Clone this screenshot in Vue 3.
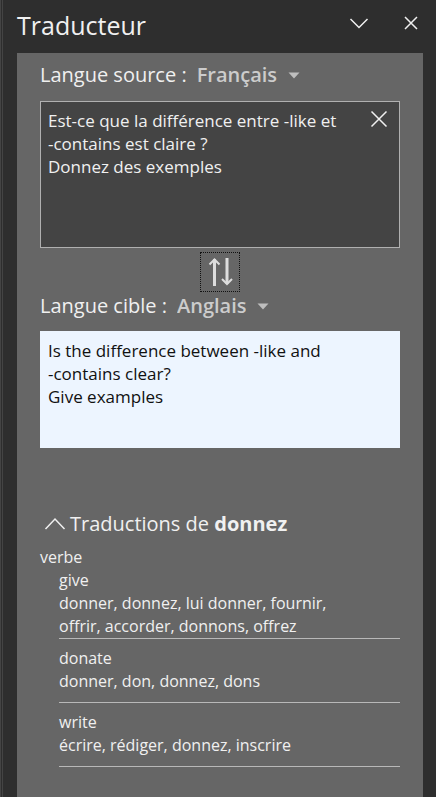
<script setup>
import { ref } from 'vue'

const languages = ['Français', 'Anglais', 'Allemand', 'Espagnol', 'Italien']
const sourceLanguage = ref('Français')
const targetLanguage = ref('Anglais')
const sourceText = ref('Est-ce que la différence entre -like et\n-contains est claire ?\nDonnez des exemples')
const targetText = ref('Is the difference between -like and\n-contains clear?\nGive examples')
const expanded = ref(true)

const word = 'donnez'
const translations = [
  { term: 'give', meanings: 'donner, donnez, lui donner, fournir, offrir, accorder, donnons, offrez' },
  { term: 'donate', meanings: 'donner, don, donnez, dons' },
  { term: 'write', meanings: 'écrire, rédiger, donnez, inscrire' },
]

function swapLanguages() {
  const language = sourceLanguage.value
  sourceLanguage.value = targetLanguage.value
  targetLanguage.value = language
  const text = sourceText.value
  sourceText.value = targetText.value
  targetText.value = text
}
</script>

<template>
  <main class="pane">
    <header class="header">
      <h1 class="title">Traducteur</h1>
      <button class="icon-button" type="button" aria-label="Options du volet">
        <svg width="20" height="20" viewBox="0 0 20 20"><path d="M1.500 6 10 14.500 18.500 6" /></svg>
      </button>
      <button class="icon-button" type="button" aria-label="Fermer">
        <svg width="20" height="20" viewBox="0 0 20 20"><path d="M4 4 16 16M16 4 4 16" /></svg>
      </button>
    </header>

    <section class="panel">
      <div class="language">
        <label for="source-language">Langue source :</label>
        <span class="picker">
          <select id="source-language" v-model="sourceLanguage">
            <option v-for="name in languages" :key="name">{{ name }}</option>
          </select>
          <svg class="caret" width="12" height="7" viewBox="0 0 12 7"><path d="M0.500 0.500H11.500L6 6.500Z" /></svg>
        </span>
      </div>

      <div class="source">
        <textarea v-model="sourceText" class="text" aria-label="Texte source" spellcheck="false"></textarea>
        <button class="clear" type="button" aria-label="Effacer" @click="sourceText = ''">
          <svg width="20" height="20" viewBox="0 0 20 20"><path d="M2.500 2.500 17.500 17.500M17.500 2.500 2.500 17.500" /></svg>
        </button>
      </div>

      <button class="swap" type="button" aria-label="Inverser les langues" @click="swapLanguages">
        <svg width="28" height="32" viewBox="0 0 28 32">
          <path class="shaft" d="M8.500 3V30M21 2V28" />
          <path class="head" d="M3.500 8.500 8.500 3.500 13.500 8.500M16 23 21 28 26 23" />
        </svg>
      </button>

      <div class="language">
        <label for="target-language">Langue cible :</label>
        <span class="picker">
          <select id="target-language" v-model="targetLanguage">
            <option v-for="name in languages" :key="name">{{ name }}</option>
          </select>
          <svg class="caret" width="12" height="7" viewBox="0 0 12 7"><path d="M0.500 0.500H11.500L6 6.500Z" /></svg>
        </span>
      </div>

      <textarea v-model="targetText" class="text target" aria-label="Texte traduit" readonly></textarea>

      <h2 class="heading">
        <button class="toggle" type="button" :aria-expanded="expanded" @click="expanded = !expanded">
          <svg width="22" height="14" viewBox="0 0 22 14"><path d="M1.500 12 11 2 20.500 12" /></svg>
          <span>Traductions de <strong>{{ word }}</strong></span>
        </button>
      </h2>

      <div v-if="expanded" class="dictionary">
        <h3 class="category">verbe</h3>
        <dl class="entries">
          <div v-for="entry in translations" :key="entry.term" class="entry">
            <dt>{{ entry.term }}</dt>
            <dd>{{ entry.meanings }}</dd>
          </div>
        </dl>
      </div>
    </section>
  </main>
</template>

<style>
body {
  margin: 0;
  background: #2e2e2e;
}
</style>

<style scoped>
.pane {
  box-sizing: border-box;
  min-height: 100vh;
  display: flex;
  flex-direction: column;
  padding: 0 13px 0 14px;
  border-left: 3px double #444444;
  background: #2e2e2e;
  color: #f0f0f0;
  font-family: "Segoe UI", "Open Sans", "Noto Sans", sans-serif;
  font-size: 16px;
  line-height: 23px;
}

button,
select,
textarea {
  margin: 0;
  padding: 0;
  border: 0;
  border-radius: 0;
  background: none;
  color: inherit;
  font: inherit;
}

svg {
  display: block;
  fill: none;
  stroke: #f0f0f0;
  stroke-width: 1.5;
}

.header {
  box-sizing: border-box;
  display: flex;
  align-items: center;
  gap: 32px;
  height: 53px;
  padding: 0 2px 3px 0;
}

.title {
  flex: 1;
  margin: 0;
  font-size: 25px;
  font-weight: 400;
  line-height: 34px;
}

.icon-button {
  display: flex;
  padding-bottom: 4px;
}

.panel {
  flex: 1;
  display: flex;
  flex-direction: column;
  padding: 8px 23px 30px;
  background: #666666;
}

.language {
  display: flex;
  align-items: center;
  gap: 10px;
  font-size: 20px;
  line-height: 28px;
}

.picker {
  display: grid;
  align-items: center;
  color: #cccccc;
}

.picker select {
  grid-area: 1 / 1;
  appearance: none;
  field-sizing: content;
  padding-right: 23px;
  font-weight: 600;
}

.caret {
  grid-area: 1 / 1;
  justify-self: end;
  fill: #bebebe;
  stroke: none;
  pointer-events: none;
}

.source {
  position: relative;
  display: flex;
  margin-top: 12px;
}

.text {
  box-sizing: border-box;
  display: block;
  width: 100%;
  height: 147px;
  padding: 7px 48px 7px 7px;
  border: 1px solid #b0b0b0;
  background: #444444;
  font-size: 17px;
  resize: none;
  overflow: auto;
  outline: none;
}

.clear {
  position: absolute;
  top: 8px;
  right: 11px;
}

.swap {
  box-sizing: border-box;
  display: grid;
  place-items: center;
  align-self: center;
  width: 40px;
  height: 40px;
  margin: 4px 0 0;
  border: 1px dotted #111111;
}

.swap svg {
  stroke: #dddddd;
}

.shaft {
  stroke-width: 3;
}

.head {
  stroke-width: 2;
}

.target {
  height: 117px;
  margin-top: 11px;
  border-color: #edf5ff;
  background: #edf5ff;
  color: #111111;
}

.heading {
  margin: 61px 0 7px;
  font-size: 20px;
  font-weight: 400;
  line-height: 30px;
}

.toggle {
  display: flex;
  align-items: center;
  gap: 4px;
  padding-left: 4px;
}

.category {
  margin: 0;
  font-size: 16px;
  font-weight: 400;
}

.entries {
  margin: 0 0 0 19px;
}

.entry {
  padding: 8px 0 9px;
  border-bottom: 1px solid #b8b8b8;
}

.entry:first-child {
  padding: 0;
}

.entry dd {
  margin: 0;
  padding-right: 64px;
}
</style>
